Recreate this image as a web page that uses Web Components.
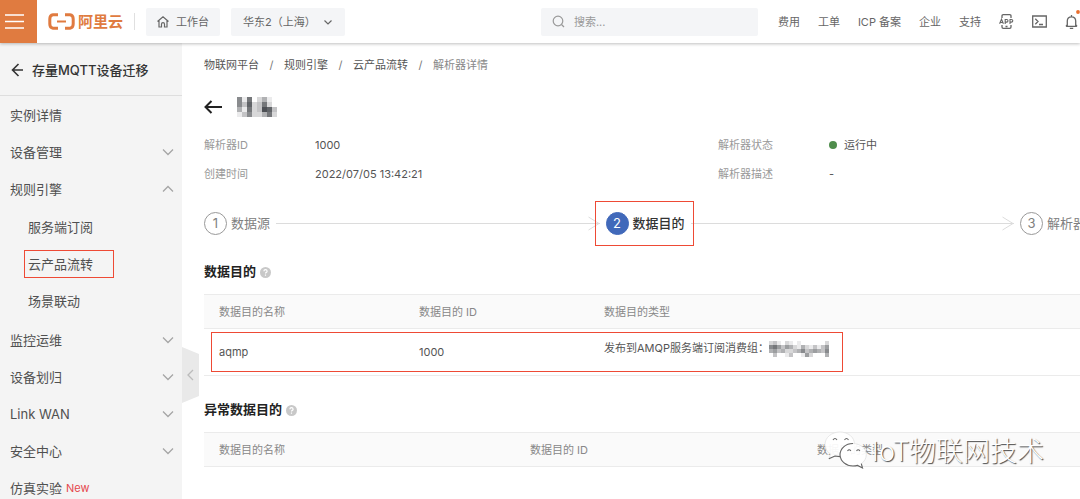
<!DOCTYPE html>
<html lang="zh-CN">
<head>
<meta charset="utf-8">
<meta name="viewport" content="width=device-width, initial-scale=1">
<title>解析器详情</title>
<style>
  html, body { margin: 0; height: 100%; }
  body {
    --line: #ebebeb; --mark: #ee4a35; --orange: #e07b40;
    font: 11px/20px Inter, "Noto Sans CJK SC", sans-serif;
    color: #555; background: #fff; overflow: hidden;
  }
</style>
</head>
<body>
<app-shell>
  <app-header slot="header"></app-header>
  <side-nav slot="side" heading="存量MQTT设备迁移">
    <nav-item>实例详情</nav-item>
    <nav-item state="closed">设备管理</nav-item>
    <nav-item state="open">规则引擎
      <nav-item slot="sub" sub>服务端订阅</nav-item>
      <nav-item slot="sub" sub marked>云产品流转</nav-item>
      <nav-item slot="sub" sub>场景联动</nav-item>
    </nav-item>
    <nav-item state="closed">监控运维</nav-item>
    <nav-item state="closed">设备划归</nav-item>
    <nav-item state="closed">Link WAN</nav-item>
    <nav-item state="closed">安全中心</nav-item>
    <nav-item badge="New">仿真实验</nav-item>
  </side-nav>
  <bread-crumb items="物联网平台,规则引擎,云产品流转,解析器详情"></bread-crumb>
  <page-title></page-title>
  <field-list>
    <field-item label="解析器ID">1000</field-item>
    <field-item label="解析器状态" status>运行中</field-item>
    <field-item label="创建时间">2022/07/05 13:42:21</field-item>
    <field-item label="解析器描述">-</field-item>
  </field-list>
  <step-flow>
    <step-item num="1">数据源</step-item>
    <step-arrow></step-arrow>
    <step-item num="2" active>数据目的</step-item>
    <step-arrow></step-arrow>
    <step-item num="3">解析器</step-item>
  </step-flow>
  <target-section heading="数据目的">
    <target-table cols="200,185" heads="数据目的名称,数据目的 ID,数据目的类型" rows="1">
      <span slot="r0c0">aqmp</span>
      <span slot="r0c1">1000</span>
      <span slot="r0c2">发布到AMQP服务端订阅消费组：<masked-text kind="group"></masked-text></span>
    </target-table>
  </target-section>
  <target-section heading="异常数据目的">
    <target-table cols="311,287" heads="数据目的名称,数据目的 ID,数据目的类型" rows="0"></target-table>
  </target-section>
  <water-mark slot="overlay">IoT物联网技术</water-mark>
</app-shell>

<script>
const chevron = (d) => `<svg width="12" height="8" viewBox="0 0 12 8" fill="none" stroke="currentColor" aria-hidden="true"><path d="${d}"/></svg>`;
const arrowLeft = (w, sw) => `<svg width="${w}" height="14" viewBox="0 0 ${w} 14" fill="none" stroke="currentColor" stroke-width="${sw}" aria-hidden="true"><path d="M${w} 7H1.5M7.5 1L1.5 7l6 6"/></svg>`;

class Base extends HTMLElement {
  constructor() { super(); this.attachShadow({ mode: 'open' }); }
  connectedCallback() { this.shadowRoot.innerHTML = '<style>*{box-sizing:border-box}svg{display:block;flex:none}a{color:inherit;text-decoration:none}button{font:inherit;color:inherit;border:0;padding:0;margin:0;background:none;cursor:pointer}</style>' + this.render(); }
  attr(n) { return this.getAttribute(n) || ''; }
}

customElements.define('app-shell', class extends Base {
  render() { return `<style>
    :host { display: flex; flex-direction: column; height: 100vh; position: relative; overflow: hidden; }
    .body { display: flex; flex: 1; min-height: 0; }
    main { flex: 1; min-width: 0; padding: 12px 0 0 22px; overflow: hidden; }
  </style>
  <slot name="header"></slot>
  <div class="body"><slot name="side"></slot><main><slot></slot></main></div>
  <slot name="overlay"></slot>`; }
});

customElements.define('app-header', class extends Base {
  render() { return `<style>
    :host { display: block; z-index: 2; background: #fff; box-shadow: 0 1px 3px rgba(0,0,0,.25); color: #666; }
    header { display: flex; align-items: center; height: 43px; padding-right: 2px; white-space: nowrap; }
    .menu { width: 37px; height: 43px; background: var(--orange); display: grid; place-items: center; padding-right: 8px; flex: none; }
    .logo { display: flex; align-items: center; gap: 3px; margin-left: 11px; padding-right: 11px; border-right: 1px solid #e0e0e0; color: var(--orange); font-size: 15px; line-height: 16px; font-weight: 700; }
    .pill { display: flex; align-items: center; gap: 7px; height: 28px; padding: 0 11px; background: #f4f5f7; border-radius: 2px; }
    .home { margin: 0 11px; }
    .region { position: relative; padding: 0; }
    select { appearance: none; font: inherit; color: inherit; border: 0; background: none; height: 28px; width: 114px; padding: 0 30px 0 12px; }
    .region svg { position: absolute; right: 13px; top: 11px; pointer-events: none; }
    .search { margin-left: auto; width: 217px; color: #999; gap: 9px; }
    input { font: inherit; border: 0; background: none; outline: 0; padding: 0; flex: 1; min-width: 0; color: #555; }
    input::placeholder { color: #999; opacity: 1; }
    nav { display: flex; align-items: center; gap: 18px; margin-left: 20px; }
  </style>
  <header>
    <button class="menu" aria-label="菜单"><svg width="19" height="15" viewBox="0 0 19 15" stroke="#fff" stroke-width="1.4"><path d="M0 1h19M0 7.5h19M0 14h19"/></svg></button>
    <a class="logo" href="#"><svg width="27" height="17" viewBox="0 0 27 17" fill="none" stroke="currentColor" aria-hidden="true"><path stroke-width="3" d="M10 1.8H5Q1.8 2.2 1.8 6v5q0 3.800 3.200 4.200h5M17 1.800h5q3.200.4 3.200 4.200v5q0 3.800-3.200 4.200h-5"/><path stroke-width="2" d="M9 8.500h9"/></svg><span>阿里云</span></a>
    <button class="pill home"><svg width="12" height="12" viewBox="0 0 12 12" fill="none" stroke="currentColor" stroke-width="1.2" aria-hidden="true"><path d="M.5 5.500L6 .8l5.500 4.700M2 4.800V11h2.500V8.200a1.500 1.500 0 0 1 3 0V11H10V4.800"/></svg>工作台</button>
    <label class="pill region"><select aria-label="地域"><option>华东2（上海）</option></select><svg width="8" height="7" viewBox="0 0 8 7" fill="none" stroke="currentColor" stroke-width="1.200"><path d="M.5 1.500L4 5l3.500-3.500"/></svg></label>
    <label class="pill search"><svg width="13" height="13" viewBox="0 0 13 13" fill="none" stroke="currentColor" stroke-width="1.200" aria-hidden="true"><circle cx="6" cy="6" r="4.800"/><path d="M9.500 9.500l2.500 2.500"/></svg><input type="text" placeholder="搜索..." aria-label="搜索"></label>
    <nav>
      <a href="#">费用</a><a href="#">工单</a><a href="#">ICP 备案</a><a href="#">企业</a><a href="#">支持</a>
      <a href="#" aria-label="App"><svg width="15" height="15" viewBox="0 0 15 15" fill="none" stroke="currentColor" stroke-width="1.300"><path d="M3 4V2q0-1.300 1.300-1.300h6.400Q12 .7 12 2v2M3 11v2q0 1.300 1.300 1.300h6.400Q12 14.300 12 13v-2M6.500 12.500h2"/><path stroke-width="1.100" d="M.6 9.800l1.900-4.600 1.900 4.600M1.200 8.500h2.600M6.200 10V5.500h1.500q1.300 0 1.300 1.300T7.700 8.100H6.200M11 10V5.500h1.300q1.500 0 1.500 1.300T12.300 8.100H11"/></svg></a>
      <a href="#" aria-label="CloudShell"><svg width="15" height="13" viewBox="0 0 15 13" fill="none" stroke="currentColor" stroke-width="1.300"><path d="M.7 1h13.600v11H.7zM3.300 3.800L6 6.500 3.300 9.200M7 9.500h4"/></svg></a>
      <a href="#" aria-label="消息"><svg width="13" height="20" viewBox="0 0 13 20" overflow="visible" fill="none" stroke="currentColor" stroke-width="1.300"><path d="M1 14.400h11M2.300 14V9q0-4.200 4.200-4.200T10.700 9v5M6.500 3v2M4.800 16.300h3.400M2.300 12.500L1 14.400M10.700 12.500l1.300 1.900"/><circle cx="13" cy="0" r="1.900" fill="#ea6f2e" stroke="none"/></svg></a>
    </nav>
  </header>`; }
});

customElements.define('side-nav', class extends Base {
  render() { return `<style>
    :host { display: block; position: relative; flex: none; width: 182px; background: #f4f4f4; }
    h2 { display: flex; align-items: center; gap: 9px; margin: 0; padding: 1px 0 0 11px; height: 53px; border-bottom: 1px solid #dedede; font-size: 13px; font-weight: 500; color: #333; white-space: nowrap; }
    .fold { position: absolute; left: 100%; top: 304px; width: 17px; height: 56px; background: #e9e9e9; clip-path: polygon(0 0, 100% 7px, 100% 49px, 0 100%); color: #bbb; display: grid; place-items: center; }
  </style>
  <h2>${arrowLeft(12, 1.6)}<span>${this.attr('heading')}</span></h2>
  <nav><slot></slot></nav>
  <button class="fold" aria-label="收起"><svg width="7" height="12" viewBox="0 0 7 12" fill="none" stroke="currentColor" stroke-width="1.300"><path d="M6 1L1 6l5 5"/></svg></button>`; }
});

customElements.define('nav-item', class extends Base {
  render() {
    const s = this.attr('state');
    const icon = s === 'open' ? chevron('M1 6.500l5-5 5 5') : s === 'closed' ? chevron('M1 1.500l5 5 5-5') : '';
    return `<style>
    :host { display: block; font-size: 13px; color: #505050; }
    a { display: flex; align-items: center; height: 37px; padding: 0 8px 0 10px; position: relative; white-space: nowrap; }
    :host([sub]) a { padding-left: 28px; }
    svg { margin-left: auto; color: #a5a5a5; stroke-width: 1.3; }
    .badge { margin-left: 4px; font-size: 11px; color: #e5484d; }
    .sub { padding: 1px 0 2px; }
    :host([marked]) a::after { content: ""; position: absolute; left: 24px; top: 5px; width: 88px; height: 26px; border: 1px solid var(--mark); }
  </style><a href="#"><slot></slot>${this.attr('badge') ? `<span class="badge">${this.attr('badge')}</span>` : ''}${icon}</a>${s === 'open' ? '<div class="sub"><slot name="sub"></slot></div>' : ''}`; }
});

customElements.define('bread-crumb', class extends Base {
  render() {
    const items = this.attr('items').split(',');
    return `<style>
    :host { display: block; }
    nav { display: flex; white-space: nowrap; }
    i { font-style: normal; width: 25px; text-align: center; color: #777; }
    span { color: #888; }
  </style><nav>${items.map((t, i) => i < items.length - 1 ? `<a href="#">${t}</a><i>/</i>` : `<span>${t}</span>`).join('')}</nav>`; }
});

// Pixelated stand-in for private values: each digit is a darkness level.
customElements.define('masked-text', class extends Base {
  render() {
    const group = this.attr('kind') === 'group';
    const map = group
      ? ['231021010000002', '675354214213135', '453422346345436', '030013001520004']
      : ['61702410', '63823720', '41723983', '13622472'];
    const c = group ? 4 : 5, w = map[0].length * c, h = map.length * c;
    const rects = map.map((r, y) => [...r].map((v, x) => v === '0' ? '' : `<rect x="${x * c}" y="${y * c}" width="${c}" height="${c}" fill-opacity="${v / 10}"/>`).join('')).join('');
    return `<style>:host { display: inline-block; vertical-align: middle; }</style><svg width="${w}" height="${h}" fill="#3a3d42" shape-rendering="crispEdges" aria-hidden="true">${rects}</svg>`; }
});

customElements.define('page-title', class extends Base {
  render() { return `<style>
    :host { display: flex; align-items: center; gap: 15px; height: 24px; margin-top: 20px; color: #222; }
  </style><button aria-label="返回">${arrowLeft(18, 2)}</button><masked-text></masked-text>`; }
});

customElements.define('field-list', class extends Base {
  render() { return `<style>
    :host { display: grid; grid-template-columns: 514px 1fr; row-gap: 9px; margin-top: 16px; }
  </style><slot></slot>`; }
});

customElements.define('field-item', class extends Base {
  render() { return `<style>
    :host { display: grid; grid-template-columns: 111px 1fr; white-space: nowrap; }
    .l { color: #999; }
    .v { display: flex; align-items: center; }
    .dot { width: 8px; height: 8px; margin-right: 7px; border-radius: 50%; background: #4f8d4c; }
  </style><span class="l">${this.attr('label')}</span><span class="v">${this.hasAttribute('status') ? '<span class="dot"></span>' : ''}<slot></slot></span>`; }
});

customElements.define('step-flow', class extends Base {
  render() { return `<style>
    :host { display: flex; align-items: center; gap: 6px; margin: 27px -6px 25px 0; height: 24px; }
  </style><slot></slot>`; }
});

customElements.define('step-item', class extends Base {
  render() { return `<style>
    :host { display: flex; align-items: center; gap: 4px; position: relative; flex: none; font-size: 13px; color: #808080; white-space: nowrap; }
    b { width: 23px; height: 23px; border: 1px solid #999; border-radius: 50%; text-align: center; line-height: 21px; font-weight: 400; }
    :host([active]) { color: #333; font-weight: 500; }
    :host([active]) b { background: #4169ba; border-color: #4169ba; color: #fff; }
    :host([active])::after { content: ""; position: absolute; inset: -11px -9px -11px -11px; border: 1px solid var(--mark); }
  </style><b>${this.attr('num')}</b><span><slot></slot></span>`; }
});

customElements.define('step-arrow', class extends Base {
  render() { return `<style>
    :host { display: flex; align-items: center; flex: 1; min-width: 20px; color: #dcdcdc; }
    span { flex: 1; height: 1px; background: currentColor; margin-right: -12px; }
  </style><span></span><svg width="12" height="15" viewBox="0 0 12 15" fill="none" stroke="currentColor"><path d="M.5 1L11 7.500.5 14M0 7.500h11"/></svg>`; }
});

customElements.define('target-section', class extends Base {
  render() { return `<style>
    :host { display: block; margin-top: 22px; }
    h3 { display: flex; align-items: center; gap: 4px; margin: 0 0 12px; font-size: 13px; line-height: 22px; font-weight: 600; color: #222; }
    .q { width: 11px; height: 11px; margin-top: 2px; border-radius: 50%; background: #c8c8c8; }
  </style><h3><span>${this.attr('heading')}</span><button class="q" aria-label="帮助"><svg width="11" height="11" viewBox="0 0 11 11" fill="none" stroke="#fff" stroke-width="1.200"><path d="M3.900 4.300q0-1.600 1.600-1.600t1.600 1.500q0 .8-.8 1.200t-.8 1.200M5.500 7.600v1.200"/></svg></button></h3><slot></slot>`; }
});

customElements.define('target-table', class extends Base {
  render() {
    const heads = this.attr('heads').split(','), cols = this.attr('cols').split(',');
    const rows = Array.from({ length: +this.attr('rows') }, (_, r) => `<tr>${heads.map((_, c) => `<td><slot name="r${r}c${c}"></slot></td>`).join('')}</tr>`).join('');
    return `<style>
    :host { display: block; position: relative; }
    table { width: 100%; table-layout: fixed; border-collapse: separate; border-spacing: 0; white-space: nowrap; }
    th, td { padding: 0 15px; text-align: left; border-bottom: 1px solid var(--line); }
    th { height: 35px; font-weight: 400; color: #888; background: #fafafa; border-top: 1px solid var(--line); }
    td { height: 47px; }
    td:last-child { vertical-align: top; padding-top: 9px; }
    .mark { position: absolute; left: 7px; top: 38px; width: 632px; height: 40px; border: 1px solid var(--mark); pointer-events: none; }
  </style><table><colgroup>${cols.map(w => `<col style="width:${w}px">`).join('')}<col></colgroup><thead><tr>${heads.map(h => `<th scope="col">${h}</th>`).join('')}</tr></thead><tbody>${rows}</tbody></table>${rows ? '<div class="mark"></div>' : ''}`; }
});

customElements.define('water-mark', class extends Base {
  render() { return `<style>
    :host { position: absolute; right: 36px; bottom: 29px; z-index: 3; display: flex; align-items: center; gap: 5px; pointer-events: none;
      font: 300 27px/40px "Noto Sans CJK SC", sans-serif; color: #fff; text-shadow: 1px 1px 1px #444; white-space: nowrap; }
  </style><svg width="43" height="40" viewBox="0 0 43 40" aria-hidden="true">
    <g fill="#fff" fill-opacity=".93" stroke="#e2e2e2" stroke-width=".8"><path d="M16 2C7.500 2 1 7.500 1 14.500c0 4 2 7.200 5.500 9.500L5 29l6-3q2.500.8 5.500.7c7.500 0 14-5.500 14-12.500S24 2 16 2z"/><path d="M29 13.500c-7 0-13 4.800-13 11S22 36 29 36q2.500 0 4.500-.6l5 2.600-1.200-4.300c3-2 5-5.300 5-9.200 0-6.200-6.300-11-13.300-11z"/></g>
    <g fill="none" stroke="#666" stroke-width="1.100"><path d="M4.800 28.800l6.200-2.800 5 .6M16 25c0-6.500 5.500-11.500 13-11.500M16 25c.5 6.500 6 11 13 11q2.500 0 4.500-.6l5 2.600-1.200-4.300"/><path d="M9 10q2-3 4 0M20.500 10q2-3 4 0M23.500 21q1.700-2.500 3.400 0M32.500 21q1.700-2.500 3.400 0"/></g></svg><span><slot></slot></span>`; }
});
</script>
</body>
</html>
